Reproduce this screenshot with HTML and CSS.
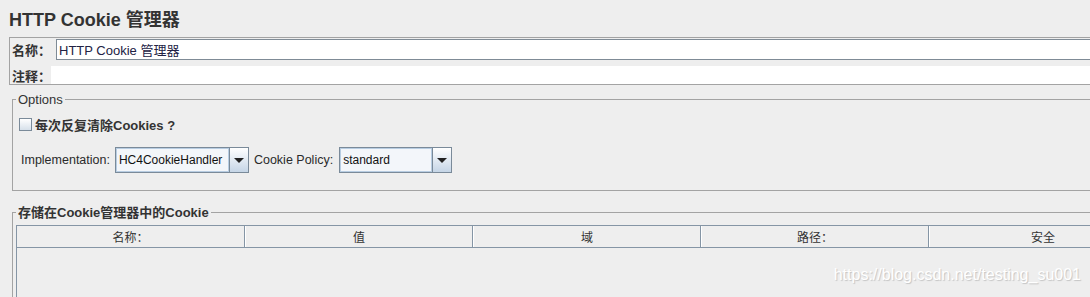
FILE: index.html
```html
<!DOCTYPE html>
<html lang="zh-CN">
<head>
    <meta charset="UTF-8">
    <meta name="viewport" content="width=device-width, initial-scale=1.0">
    <title>HTTP Cookie 管理器</title>
    <link rel="stylesheet" href="styles.css">
</head>
<body>
    <h1 class="title">HTTP Cookie 管理器</h1>

    <div class="name-box">
        <div class="name-row">
            <label class="field-label">名称：</label>
            <input class="name-input" type="text" value="HTTP Cookie 管理器">
        </div>
        <div class="comment-row">
            <label class="field-label">注释：</label>
            <input class="comment-input" type="text" value="">
        </div>
    </div>

    <fieldset class="group options">
        <legend>Options</legend>
        <div class="check-row">
            <span class="checkbox"></span>
            <span class="check-text">每次反复清除Cookies ?</span>
        </div>
        <div class="combo-row">
            <span class="combo-label">Implementation:</span>
            <div class="combo combo-impl">
                <span class="combo-value">HC4CookieHandler</span>
                <span class="combo-arrow"></span>
            </div>
            <span class="combo-label">Cookie Policy:</span>
            <div class="combo combo-policy">
                <span class="combo-value">standard</span>
                <span class="combo-arrow"></span>
            </div>
        </div>
    </fieldset>

    <fieldset class="group cookies">
        <legend>存储在Cookie管理器中的Cookie</legend>
        <div class="cookie-table">
            <div class="table-head">
                <div class="head-cell">名称：</div>
                <div class="head-cell">值</div>
                <div class="head-cell">域</div>
                <div class="head-cell">路径：</div>
                <div class="head-cell">安全</div>
            </div>
            <div class="table-body"></div>
        </div>
    </fieldset>

    <div class="watermark">https://blog.csdn.net/testing_su001</div>
</body>
</html>
```

FILE: styles.css
```css
body {
    margin: 0;
    background: #eeeeee;
    color: #333333;
    font-family: "Liberation Sans", Arial, "Noto Sans CJK SC", sans-serif;
    font-size: 13px;
    overflow: hidden;
    height: 297px;
    position: relative;
}
.title {
    margin: 0 0 7px 0;
    padding: 10px 0 0 9px;
    font-size: 18px;
    line-height: 20px;
    font-weight: bold;
    color: #333333;
}

/* name / comment box */
.name-box {
    margin-left: 9px;
    border: 1px solid #a3a3a3;
    border-right: none;
    padding: 1px 0 0 2px;
    display: flex;
    flex-direction: column;
    gap: 6px;
}
.name-row, .comment-row {
    display: flex;
    align-items: center;
}
.name-row {
    height: 21px;
}
.comment-row {
    height: 18px;
}
.field-label {
    font-weight: bold;
    font-size: 13px;
    width: 39px;
    color: #333333;
}
.name-input, .comment-input {
    flex: 1;
    margin: 0;
    font-family: inherit;
    font-size: 13px;
    color: #222244;
    background: #ffffff;
    box-sizing: border-box;
    outline: none;
}
.name-input {
    margin-left: 5px;
    height: 21px;
    border: 1px solid #7f8b96;
    border-right: none;
    padding: 0 2px;
}
.comment-input {
    height: 18px;
    border: none;
    padding: 0 2px;
}

/* titled groups */
.group {
    margin: 7px 0 0 12px;
    padding: 0;
    border: 1px solid #a3a3a3;
    border-right: none;
    min-width: 0;
}
.group legend {
    margin-left: 3px;
    padding: 0 2px;
    line-height: 15px;
    font-size: 13px;
    color: #333333;
}
.options {
    padding-bottom: 17px;
}
.check-row {
    margin: 7px 0 0 6px;
    display: flex;
    align-items: center;
    height: 20px;
    gap: 3px;
}
.checkbox {
    width: 11px;
    height: 11px;
    border: 1px solid #7a8a99;
    background: linear-gradient(#ffffff, #d6e0ea);
}
.check-text {
    font-weight: bold;
}
.combo-row {
    margin: 13px 0 0 8px;
    display: flex;
    align-items: center;
    gap: 5px;
}
.combo-label {
    font-size: 12.5px;
    color: #2a2a2a;
}
.combo {
    display: flex;
    height: 26px;
    box-sizing: border-box;
    border: 1px solid #7a8a99;
    background: #ffffff;
}
.combo-impl {
    width: 134px;
}
.combo-policy {
    width: 113px;
    margin-left: 1px;
}
.combo-value {
    flex: 1;
    display: flex;
    align-items: center;
    padding-left: 2px;
    border: 1px solid #b8cde2;
    background: #f3f6fa;
    font-size: 12px;
    color: #111111;
    white-space: nowrap;
    overflow: hidden;
}
.combo-arrow {
    width: 18px;
    border-left: 1px solid #7a8a99;
    background: linear-gradient(#ffffff, #c5d5e6);
    display: flex;
    align-items: center;
    justify-content: center;
}
.combo-arrow::after {
    content: "";
    border-left: 5px solid transparent;
    border-right: 5px solid transparent;
    border-top: 5px solid #222222;
}

/* cookie table */
.cookies {
    margin-top: 14px;
    height: 100px;
}
.cookies legend {
    font-weight: bold;
}
.cookie-table {
    margin: 5px 0 0 3px;
    border-left: 1px solid #8595a5;
    height: 100%;
}
.table-head {
    display: grid;
    grid-template-columns: repeat(5, 228px);
    height: 23px;
    box-sizing: border-box;
    border-top: 1px solid #8595a5;
    border-bottom: 1px solid #8595a5;
}
.head-cell {
    display: flex;
    align-items: center;
    justify-content: center;
    border-right: 1px solid #8595a5;
    border-left: 1px solid #ffffff;
    font-size: 12px;
    color: #333333;
}
.head-cell:first-child {
    border-left: none;
}
.table-body {
    height: 60px;
}

.watermark {
    position: absolute;
    right: 9px;
    top: 266px;
    font-size: 16px;
    color: #ffffff;
    text-shadow: 1px 1px 1px rgba(0, 0, 0, 0.18);
}
```
